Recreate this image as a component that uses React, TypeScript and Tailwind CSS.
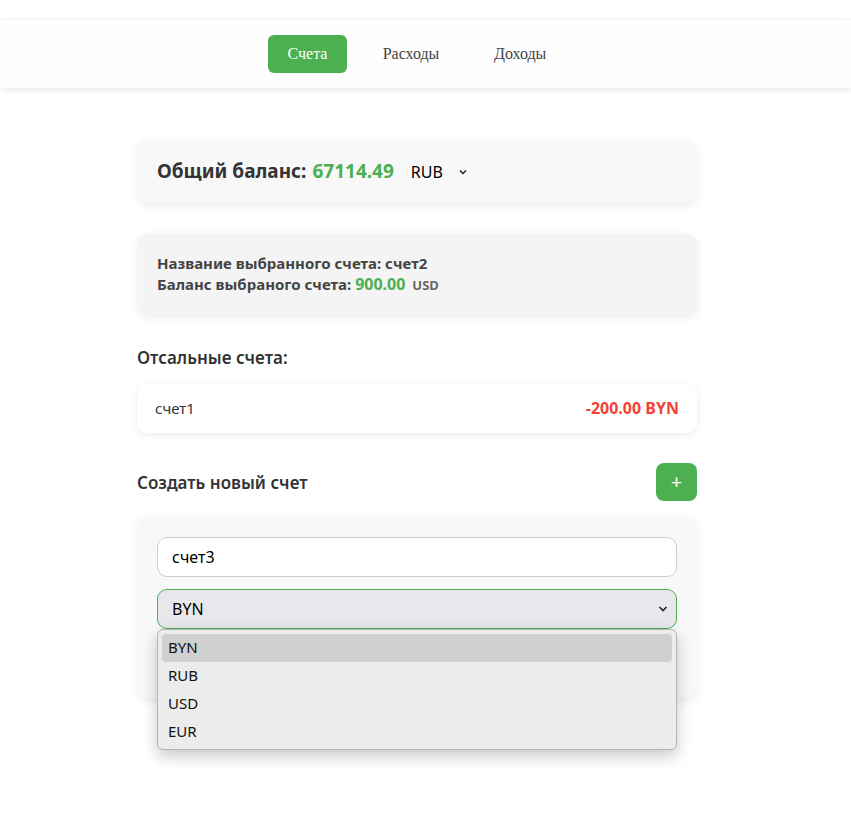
import React from "react";

const sans = { fontFamily: '"Segoe UI", "Noto Sans", "Open Sans", sans-serif' };

export default function App() {
  return (
    <div className="min-h-[827px] bg-white text-[#333]" style={sans}>
      <div className="h-[19px] bg-white" />
      <header className="h-[69px] bg-[#fefefe] border-t border-[#f4f4f4] shadow-[0_2px_6px_rgba(0,0,0,0.09)] flex items-center pl-[268px] gap-[35px]" style={{ fontFamily: '"Liberation Serif", serif' }}>
        <button className="w-[79px] h-[38px] rounded-[6px] bg-[#4caf50] text-white text-[16px]">Счета</button>
        <button className="text-[16px] text-[#444] w-[58px]">Расходы</button>
        <button className="text-[16px] text-[#444] ml-[19px]">Доходы</button>
      </header>

      <main className="ml-[137px] w-[560px] pt-[52px]">
        <div className="h-[63px] rounded-[12px] bg-[#f8f8f8] shadow-[0_3px_10px_rgba(0,0,0,0.08)] flex items-center px-[20px]">
          <span className="text-[19px] font-bold text-[#333]">Общий баланс: </span>
          <span className="text-[19px] font-bold text-[#4caf50] ml-[6px]">67114.49</span>
          <span className="ml-[17px] text-[16px] text-black">RUB</span>
          <svg className="ml-[15px]" width="10" height="8" viewBox="0 0 10 8"><path d="M2 2.5 L5 5.5 L8 2.5" fill="none" stroke="#222" strokeWidth="1.5" /></svg>
        </div>

        <div className="mt-[30px] h-[82px] rounded-[12px] bg-[#f4f4f4] shadow-[0_3px_10px_rgba(0,0,0,0.08)] flex flex-col justify-center px-[20px] text-[15px] font-bold text-[#444] leading-[21px]">
          <div>Название выбранного счета: счет2</div>
          <div>
            Баланс выбраного счета: <span className="text-[#4caf50] text-[16px]">900.00</span>{" "}
            <span className="text-[#666] text-[13px] ml-[3px]">USD</span>
          </div>
        </div>

        <div className="mt-[30px] text-[17px] font-semibold text-[#333]">Отсальные счета:</div>

        <div className="mt-[13px] h-[49px] rounded-[10px] bg-white shadow-[0_2px_8px_rgba(0,0,0,0.08)] flex items-center justify-between pl-[18px] pr-[18px]">
          <span className="text-[15px] text-[#333]">счет1</span>
          <span className="text-[16px] font-bold text-[#f44336]">-200.00 BYN</span>
        </div>

        <div className="mt-[30px] flex items-center justify-between">
          <span className="text-[17px] font-semibold text-[#333] mt-[2px]">Создать новый счет</span>
          <button className="w-[41px] h-[38px] rounded-[8px] bg-[#4caf50] text-white text-[20px] leading-none">+</button>
        </div>

        <div className="relative mt-[16px] rounded-[12px] bg-[#f8f8f8] shadow-[0_3px_10px_rgba(0,0,0,0.08)] p-[20px] flex flex-col gap-[12px]">
          <div className="h-[40px] rounded-[10px] border border-[#ccc] bg-white flex items-center px-[14px] text-[16px] text-black">счет3</div>
          <div className="h-[40px] rounded-[10px] border border-[#4caf50] bg-[#e8e8ec] flex items-center justify-between pl-[14px] pr-[8px] text-[16px] text-black">
            <span>BYN</span>
            <svg width="10" height="8" viewBox="0 0 10 8"><path d="M1.5 2 L5 5.5 L8.5 2" fill="none" stroke="#222" strokeWidth="1.6" /></svg>
          </div>
          <div className="h-[37px] rounded-[8px] bg-[#4caf50]" />

          <div className="absolute left-[20px] right-[20px] top-[112px] h-[121px] rounded-[6px] border border-[#b5b5b5] bg-[#ececec] shadow-[0_6px_16px_rgba(0,0,0,0.22)] px-[4px] py-[4px] text-[15px] text-[#111]">
            <div className="h-[28px] rounded-[4px] bg-[#d0d0d0] flex items-center pl-[6px]">BYN</div>
            <div className="h-[28px] flex items-center pl-[6px]">RUB</div>
            <div className="h-[28px] flex items-center pl-[6px]">USD</div>
            <div className="h-[28px] flex items-center pl-[6px]">EUR</div>
          </div>
        </div>
      </main>
    </div>
  );
}
